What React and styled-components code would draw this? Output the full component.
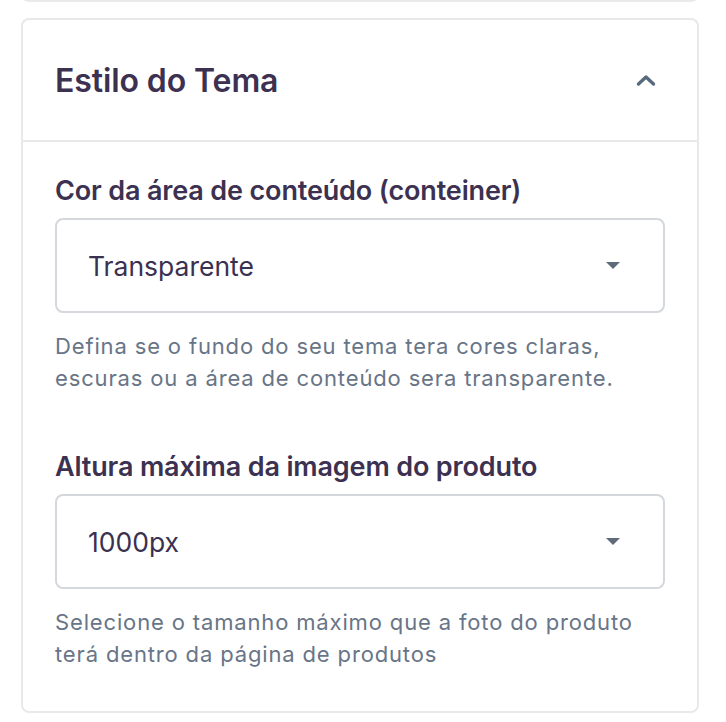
import styled, { createGlobalStyle } from 'styled-components';

const Global = createGlobalStyle`
  body { margin: 0; background: #fff; font-family: Inter, "Noto Sans", sans-serif; }
`;

const fields = [
  {
    label: 'Cor da área de conteúdo (conteiner)',
    value: 'Transparente',
    help: ['Defina se o fundo do seu tema tera cores claras,', 'escuras ou a área de conteúdo sera transparente.'],
  },
  {
    label: 'Altura máxima da imagem do produto',
    value: '1000px',
    help: ['Selecione o tamanho máximo que a foto do produto', 'terá dentro da página de produtos'],
  },
];

export default function App() {
  return (
    <Page>
      <Global />
      <PrevCard />
      <Card>
        <Header>
          <Title>Estilo do Tema</Title>
          <svg width="22" height="14" viewBox="0 0 22 14">
            <path d="M3.5 11 L11 4 L18.5 11" fill="none" stroke="#5a6a7e" strokeWidth="3.4" strokeLinecap="round" strokeLinejoin="round" />
          </svg>
        </Header>
        <Body>
          {fields.map((f) => (
            <Field key={f.label}>
              <Label>{f.label}</Label>
              <Select>
                <span>{f.value}</span>
                <svg width="16" height="9" viewBox="0 0 16 9">
                  <path d="M1 1 L15 1 L8 8 Z" fill="#5f6b7a" />
                </svg>
              </Select>
              <Help>
                {f.help.map((l) => (
                  <div key={l}>{l}</div>
                ))}
              </Help>
            </Field>
          ))}
        </Body>
      </Card>
    </Page>
  );
}

const Page = styled.div`
  padding: 0 27px 0 21px;
  display: flex;
  flex-direction: column;
  gap: 16px;
`;

const PrevCard = styled.div`
  height: 20px;
  margin-top: -22px;
  border: 2px solid #e9e9eb;
  border-radius: 8px;
`;

const Card = styled.div`
  border: 2px solid #e9e9eb;
  border-radius: 8px;
  background: #fff;
`;

const Header = styled.div`
  height: 120px;
  padding: 0 40px 0 32px;
  display: flex;
  align-items: center;
  justify-content: space-between;
  border-bottom: 2px solid #e9e9eb;
`;

const Title = styled.h2`
  margin: 0;
  font-size: 32px;
  font-weight: 600;
  letter-spacing: -0.1px;
  color: #3c3150;
`;

const Body = styled.div`
  padding: 33px 32px 41px;
  display: flex;
  flex-direction: column;
  gap: 57px;
`;

const Field = styled.div`
  display: flex;
  flex-direction: column;
`;

const Label = styled.div`
  font-size: 27px;
  line-height: 32px;
  font-weight: 600;
  letter-spacing: -0.15px;
  color: #3c3150;
  margin-bottom: 11px;
`;

const Select = styled.div`
  height: 91px;
  border: 2px solid #d4d8dd;
  border-radius: 8px;
  padding: 0 42px 0 31px;
  display: flex;
  align-items: center;
  justify-content: space-between;
  font-size: 26.5px;
  color: #3a3150;
`;

const Help = styled.div`
  margin-top: 17px;
  font-size: 22px;
  line-height: 32px;
  letter-spacing: 0.85px;
  color: #687587;
`;
